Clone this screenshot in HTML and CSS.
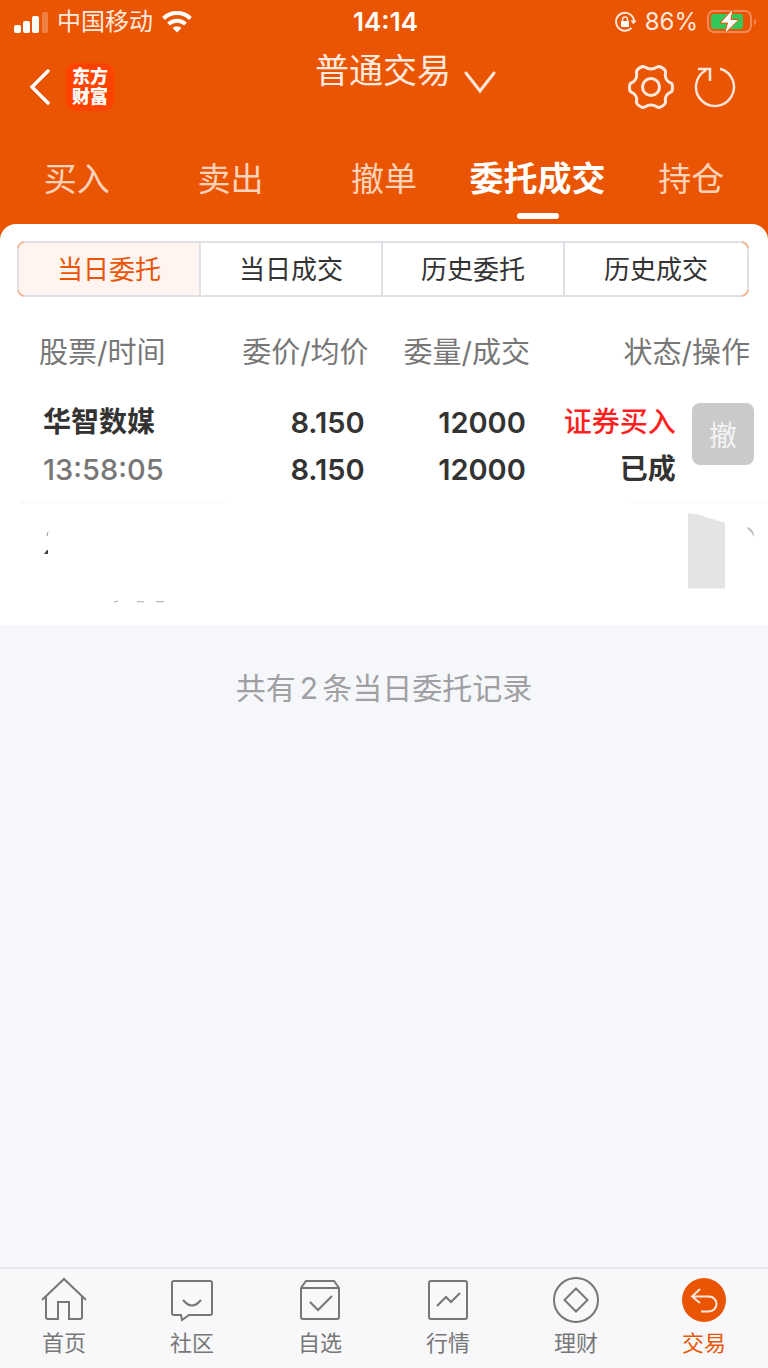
FILE: index.html
```html
<!DOCTYPE html>
<html lang="zh-CN">
<head>
  <meta charset="UTF-8" />
  <meta name="viewport" content="width=device-width, initial-scale=1.0"/>
  <title>委托成交</title>
  <link rel="stylesheet" href="styles.css">
</head>
<body>
  <header class="top">
    <!-- Status bar -->
    <div class="status-bar">
      <div class="status-left">
        <svg width="34" height="24" viewBox="0 0 34 24" fill="#fff">
          <rect x="0" y="15" width="7" height="8" rx="2"/>
          <rect x="9" y="11" width="7" height="12" rx="2"/>
          <rect x="18" y="6" width="7" height="17" rx="2"/>
          <rect x="28" y="2" width="6" height="21" rx="2" opacity="0.25"/>
        </svg>
        <span>中国移动</span>
        <svg width="30" height="24" viewBox="0 0 30 24" fill="none" stroke="#fff" stroke-width="4">
          <path d="M1.500 8.500a19.500 19.500 0 0 1 27 0"/>
          <path d="M6.500 14a12.500 12.500 0 0 1 17 0"/>
          <path d="M15 22.500l-4.500-4.500a6.500 6.500 0 0 1 9 0z" fill="#fff" stroke="none"/>
        </svg>
      </div>
      <span class="clock">14:14</span>
      <div class="status-right">
        <svg width="22" height="22" viewBox="0 0 22 22" fill="none" stroke="#ffe6d9" stroke-width="2">
          <path d="M17.500 17a9 9 0 1 1 2.500-7"/>
          <path d="M16.500 9.500h6l-3 4z" fill="#ffe6d9" stroke="none"/>
          <rect x="7" y="10" width="8" height="6" rx="1" fill="#fff" stroke="none"/>
          <path d="M8.500 10.500v-2a2.500 2.500 0 0 1 5 0v2" stroke-width="1.500"/>
        </svg>
        <span>86%</span>
        <svg width="50" height="26" viewBox="0 0 50 26">
          <rect x="1" y="2" width="43" height="21" rx="6" fill="none" stroke="#f28a58" stroke-width="2"/>
          <path d="M47 9.500a4 4 0 0 1 0 7z" fill="#f28a58"/>
          <rect x="4" y="5" width="32" height="15" rx="3" fill="#34c759"/>
          <path d="M26 0L13 14h7.500L17.500 25L32 10.500h-8z" fill="#fff" stroke="#ea5504" stroke-width="1"/>
        </svg>
      </div>
    </div>

    <!-- Title bar -->
    <div class="title-bar">
      <div class="title-left">
        <button class="icon-btn" aria-label="返回">
          <svg width="22" height="36" viewBox="0 0 22 36" fill="none" stroke="#fff" stroke-width="3.500" stroke-linecap="round">
            <path d="M18 2L2 18l16 16"/>
          </svg>
        </button>
        <div class="logo">东方<br>财富</div>
      </div>
      <button class="title">普通交易
        <svg class="title-arrow" width="34" height="24" viewBox="0 0 34 24" fill="none" stroke="#ffe6d9" stroke-width="3" stroke-linecap="round">
          <path d="M3 2l14 18L31 2"/>
        </svg>
      </button>
      <div class="title-right">
        <button class="icon-btn" aria-label="设置">
          <svg width="46" height="46" viewBox="0 0 46 46" fill="none" stroke="#ffe9de" stroke-width="3" stroke-linejoin="round">
            <path d="M14.500 2.500C17 2 17.500 5 23 5S29 2 31.500 2.500C34 3.500 37 5.500 37.500 7.500C38 10 36 11.500 38.500 15.500S43.500 18.500 44 20C44.500 22 44.500 25 44 27C43 29 41 27.500 38.500 31.500S38 36.500 37.500 38.500C37 40.500 34 42.500 31.500 43.500C29 44 28.500 41 23 41S17 44 14.500 43.500C12 42.500 9 40.500 8.500 38.500C8 36.500 10 35.500 7.500 31.500S3 29 2 27C1.500 25 1.500 22 2 20C2.500 18.500 5 19.500 7.500 15.500S8 10 8.500 7.500C9 5.500 12 3.500 14.500 2.500z"/>
            <circle cx="23" cy="23" r="8.500"/>
          </svg>
        </button>
        <button class="icon-btn" aria-label="刷新">
          <svg width="42" height="42" viewBox="0 0 42 42" fill="none" stroke="#ffe6d9" stroke-width="2.500">
            <path d="M26 2.670a19 19 0 1 1-14 1.600M4 3h12v12"/>
          </svg>
        </button>
      </div>
    </div>

    <nav class="tabs">
      <a href="#">买入</a>
      <a href="#">卖出</a>
      <a href="#">撤单</a>
      <a href="#" class="active">委托成交</a>
      <a href="#">持仓</a>
    </nav>
  </header>

  <main>
    <section class="panel">
      <div class="segment">
        <button class="active">当日委托</button>
        <button>当日成交</button>
        <button>历史委托</button>
        <button>历史成交</button>
      </div>

      <table class="orders">
        <colgroup>
          <col class="col-name">
          <col class="col-price">
          <col class="col-amount">
          <col class="col-state">
          <col>
        </colgroup>
        <thead>
          <tr>
            <th class="left">股票/时间</th>
            <th>委价/均价</th>
            <th>委量/成交</th>
            <th colspan="2" class="last">状态/操作</th>
          </tr>
        </thead>
        <tbody>
          <tr>
            <td class="left">华智数媒<br><span class="time">13:58:05</span></td>
            <td class="number">8.150<br>8.150</td>
            <td class="number">12000<br>12000</td>
            <td><span class="buy">证券买入</span><br>已成</td>
            <td class="action"><button class="cancel-btn" disabled>撤</button></td>
          </tr>
        </tbody>
      </table>

      <!-- Second order, wiped out -->
      <div class="erased">
        <svg width="228" height="124" viewBox="0 0 228 124">
          <path d="M20 1.500h206" stroke="#f8f8f9" stroke-width="2"/>
          <path d="M48 31l-1 4" stroke="#999" stroke-width="1"/>
          <path d="M44 53l3-4h1v4z" fill="#444"/>
          <path d="M114 101l4-1M137 101q3-1 7 0M156 101q4-1 8 0" stroke="#aaa" stroke-width="1" fill="none"/>
        </svg>
        <svg width="140" height="124" viewBox="0 0 140 124">
          <path d="M2 1.500h138" stroke="#f8f8f9" stroke-width="2"/>
          <path d="M60 12.500l10 1 27 8.500v65.500H60z" fill="#e4e4e4"/>
          <path d="M118 26q8 1 8 10q-3-6-8-10z" fill="#bbb"/>
        </svg>
      </div>
    </section>

    <p class="summary">共有<span>2</span>条当日委托记录</p>
  </main>

  <!-- Bottom menu -->
  <nav class="bottom-nav">
    <a href="#">
      <svg width="48" height="48" viewBox="0 0 48 48">
        <path d="M2 24L24 3l22 21M6 20v21q0 2 2 2h10V26h11v17h11q2 0 2-2V20"/>
      </svg>
      首页
    </a>
    <a href="#">
      <svg width="48" height="48" viewBox="0 0 48 48">
        <path d="M6 5h36q2 0 2 2v30q0 2-2 2H21l-7 5-1-5H6q-2 0-2-2V7q0-2 2-2zM15 24q9 11 18 0"/>
      </svg>
      社区
    </a>
    <a href="#">
      <svg width="48" height="48" viewBox="0 0 48 48">
        <path d="M10 5h28l5 7v29q0 2-2 2H7q-2 0-2-2V12zM5 12h38M14 26l8 8 14-14"/>
      </svg>
      自选
    </a>
    <a href="#">
      <svg width="48" height="48" viewBox="0 0 48 48">
        <path d="M7 5h34q2 0 2 2v34q0 2-2 2H7q-2 0-2-2V7q0-2 2-2zM13 30l9-9 5 5 9-9"/>
      </svg>
      行情
    </a>
    <a href="#">
      <svg width="48" height="48" viewBox="0 0 48 48">
        <circle cx="24" cy="24" r="22"/>
        <path d="M24 12.500L35.500 24L24 35.500L12.500 24z"/>
      </svg>
      理财
    </a>
    <a href="#" class="active">
      <svg width="48" height="48" viewBox="0 0 48 48">
        <circle cx="24" cy="24" r="22"/>
        <path d="M20 13l-8 7.500 8 6.500M12 20.500h17a7.500 7.500 0 0 1 0 15h-8"/>
      </svg>
      交易
    </a>
  </nav>
</body>
</html>
```

FILE: styles.css
```css
* {
  box-sizing: border-box;
}

body {
  margin: 0;
  min-height: 100vh;
  display: flex;
  flex-direction: column;
  font-family: Inter, "Noto Sans CJK SC", sans-serif;
  background: #f6f7fb;
  color: #333;
}

button {
  font-family: inherit;
  border: none;
  background: none;
  padding: 0;
  cursor: pointer;
}

a {
  text-decoration: none;
}

svg {
  display: block;
}

/* Header */
.top {
  padding-bottom: 16px;
  background: #ea5504;
  color: #fff;
}

.status-bar {
  display: grid;
  grid-template-columns: 1fr auto 1fr;
  align-items: center;
  height: 42px;
  padding: 2px 11px 0 14px;
  font-size: 24px;
  line-height: 32px;
  color: #ffe9de;
}

.status-left,
.status-right {
  display: flex;
  align-items: center;
  gap: 9px;
}

.status-right {
  justify-content: flex-end;
}

.clock {
  font-size: 26px;
  font-weight: 600;
  color: #fff;
}

.title-bar {
  display: grid;
  grid-template-columns: 1fr auto 1fr;
  align-items: center;
  height: 90px;
  padding: 0 32px 0 30px;
}

.title-left,
.title-right {
  display: flex;
  align-items: center;
  gap: 14px;
}

.title-right {
  justify-content: flex-end;
  gap: 20px;
}

.logo {
  width: 48px;
  height: 48px;
  padding-top: 4px;
  border-radius: 10px;
  background: #ff4200;
  font-size: 18px;
  line-height: 20px;
  font-weight: 900;
  text-align: center;
}

.title {
  position: relative;
  align-self: start;
  font-size: 34px;
  line-height: 58px;
  color: #ffe9de;
}

.title-arrow {
  position: absolute;
  left: 100%;
  top: 29px;
  margin-left: 12px;
}

.tabs {
  display: grid;
  grid-template-columns: repeat(5, 1fr);
  height: 92px;
}

.tabs a {
  position: relative;
  font-size: 33px;
  line-height: 94px;
  text-align: center;
  color: #ffd2ba;
}

.tabs a.active {
  font-size: 34px;
  font-weight: 700;
  color: #fff;
}

.tabs a.active::after {
  content: "";
  position: absolute;
  left: 50%;
  top: 81px;
  width: 42px;
  height: 6px;
  margin-left: -21px;
  border-radius: 3px;
  background: #fff;
}

/* Order list */
main {
  flex: 1;
  margin-top: -16px;
}

.panel {
  padding-top: 17px;
  border-radius: 16px 16px 0 0;
  background: #fff;
}

.segment {
  position: relative;
  display: grid;
  grid-template-columns: repeat(4, 1fr);
  height: 56px;
  margin: 0 19px 0 17px;
  border: 2px solid #f3b596;
  border-radius: 8px;
}

/* grey edges, the orange border stays visible in the corners */
.segment::after {
  content: "";
  position: absolute;
  inset: -2px;
  pointer-events: none;
  background:
    linear-gradient(#dfe1e6, #dfe1e6) top / calc(100% - 14px) 2px no-repeat,
    linear-gradient(#dfe1e6, #dfe1e6) bottom / calc(100% - 14px) 2px no-repeat,
    linear-gradient(#dfe1e6, #dfe1e6) left / 2px calc(100% - 14px) no-repeat,
    linear-gradient(#dfe1e6, #dfe1e6) right / 2px calc(100% - 14px) no-repeat;
}

.segment button {
  padding-bottom: 3px;
  border-right: 2px solid #dfe1e6;
  font-size: 26px;
  color: #333;
}

.segment button:last-child {
  border-right: none;
}

.segment button.active {
  border-radius: 6px 0 0 6px;
  background: #fff4f0;
  color: #ea5504;
}

.orders {
  width: 100%;
  margin-top: 11px;
  table-layout: fixed;
  border-collapse: collapse;
  font-size: 28px;
}

.col-name {
  width: 30%;
}

.col-price {
  width: 18%;
}

.col-amount {
  width: 21%;
}

.col-state {
  width: 19%;
}

.orders th {
  height: 84px;
  padding: 0;
  font-size: 29px;
  font-weight: 400;
  text-align: right;
  color: #777;
}

.orders th.left {
  padding-left: 39px;
  text-align: left;
}

.orders th.last {
  padding-right: 18px;
}

.orders td {
  padding: 7px 0;
  line-height: 47px;
  font-weight: 600;
  text-align: right;
  vertical-align: top;
  white-space: nowrap;
}

.orders td.number {
  padding-right: 4px;
  font-size: 29px;
}

.orders td.left {
  padding-left: 43px;
  text-align: left;
}

.orders td.action {
  padding: 11px 14px 0 0;
}

.time {
  font-size: 29px;
  font-weight: 500;
  color: #777;
}

.buy {
  font-weight: 500;
  color: #ff1f1f;
}

.cancel-btn {
  width: 62px;
  height: 62px;
  border-radius: 8px;
  background: #cacaca;
  font-size: 28px;
  color: #f4f4f4;
}

.erased {
  display: flex;
  justify-content: space-between;
}

.summary {
  margin: 40px 0;
  font-size: 30px;
  line-height: 46px;
  text-align: center;
  color: #a0a0a2;
}

.summary span {
  margin: 0 4px;
}

/* Bottom menu */
.bottom-nav {
  display: grid;
  grid-template-columns: repeat(6, 1fr);
  height: 101px;
  padding-top: 7px;
  border-top: 2px solid #e6e7ea;
  background: #f8f8fb;
}

.bottom-nav a {
  display: flex;
  flex-direction: column;
  align-items: center;
  font-size: 22px;
  line-height: 38px;
  color: #777;
}

.bottom-nav svg {
  fill: none;
  stroke: #777;
  stroke-width: 2;
}

.bottom-nav a.active {
  color: #ea5504;
}

.bottom-nav .active circle {
  fill: #ea5504;
  stroke: none;
}

.bottom-nav .active path {
  stroke: #ffe9de;
}
```
